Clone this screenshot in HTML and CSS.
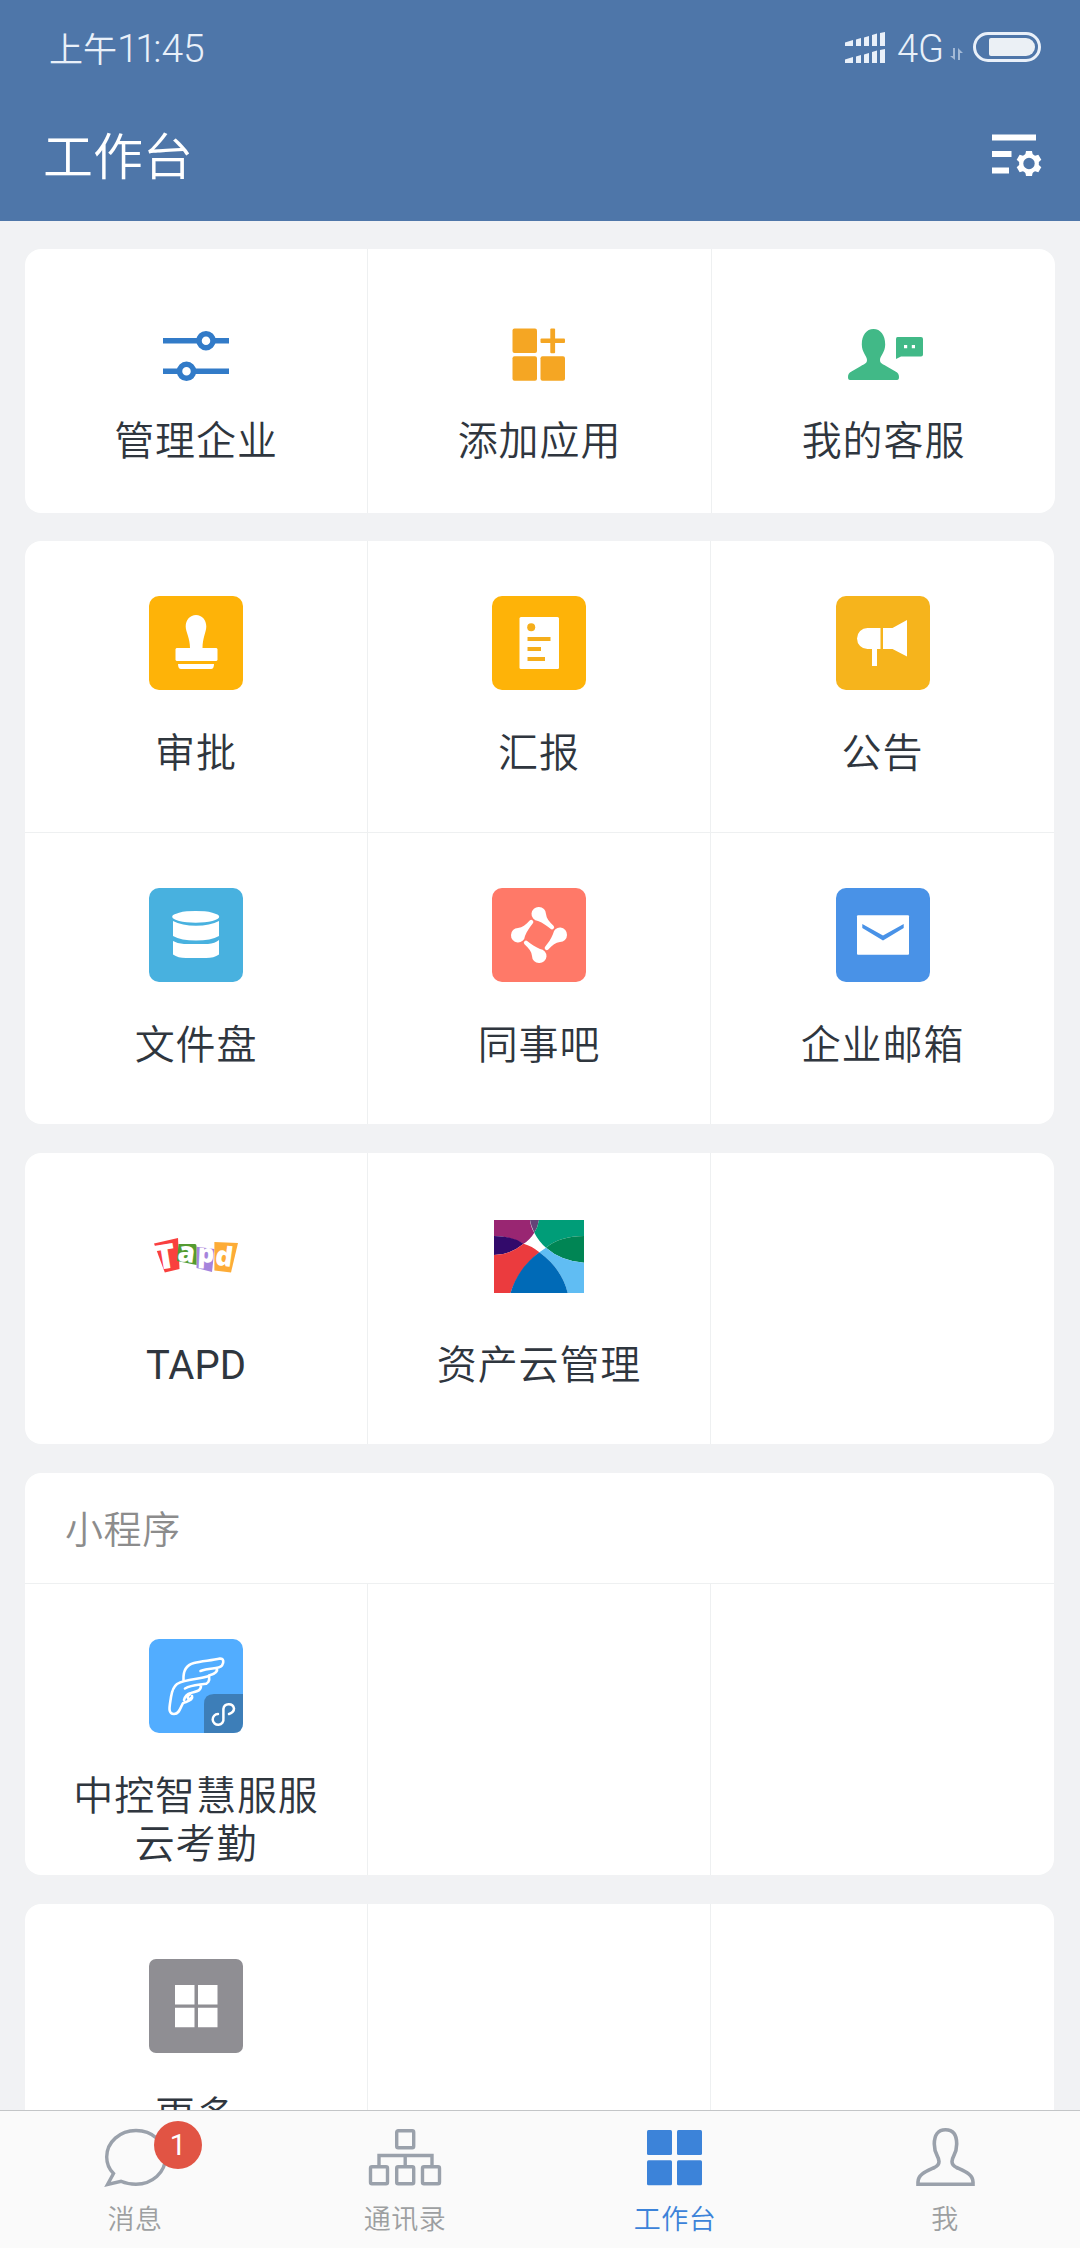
FILE: index.html
```html
<!DOCTYPE html>
<html lang="zh-CN">
<head>
<meta charset="utf-8">
<title>工作台</title>
<link rel="stylesheet" href="styles.css">
</head>
<body>
<div class="app">
  <header class="header">
    <div class="status">
      <div class="clock">上午<span class="digits"><span class="ones">11</span>:45</span></div>
      <div class="indicators">
        <svg class="signal" width="40" height="31" viewBox="0 0 40 31" fill="#e9f0f9">
          <path d="M0 10.500L8 8v6H0zM11 7.500l5-1.500v8h-5zM19 5.500l5-1.500v10h-5zM27 3l5-1.500V14h-5zM35 1l5-1v14h-5z"/>
          <path d="M0 27.500L8 25v6H0zM11 24.500l5-1.500v8h-5zM19 22.500l5-1.500v10h-5zM27 20l5-1.500V31h-5zM35 18l5-1v14h-5z"/>
        </svg>
        <span class="network">4G</span>
        <svg class="arrows" width="13" height="13" viewBox="0 0 13 13" fill="#a3b9d6"><path d="M3 0h2v12L0 8h3zM8 12V0l5 5h-3v7z"/></svg>
        <svg class="battery" width="68" height="30" viewBox="0 0 68 30"><rect x="1.500" y="1.500" width="65" height="27" rx="13.500" fill="none" stroke="#e9f0f9" stroke-width="3"/><path d="M18 6h35a9 9 0 0 1 0 18H18q-2 0-2-2V8q0-2 2-2z" fill="#ebf0f5"/></svg>
      </div>
    </div>
    <div class="titlebar">
      <h1 class="title">工作台</h1>
      <svg width="50" height="44" viewBox="0 0 50 44">
        <path d="M0 3.500h44M0 20h19.500M0 36.500h17" stroke="#fff" stroke-width="6"/>
        <circle cx="37" cy="29.500" r="7.800" fill="none" stroke="#fff" stroke-width="4.200"/>
        <g fill="#fff"><path id="tooth" d="M34 17h6l1 5h-8z"/><use href="#tooth" transform="rotate(60 37 29.500)"/><use href="#tooth" transform="rotate(120 37 29.500)"/><use href="#tooth" transform="rotate(180 37 29.500)"/><use href="#tooth" transform="rotate(240 37 29.500)"/><use href="#tooth" transform="rotate(300 37 29.500)"/></g>
      </svg>
    </div>
  </header>

  <main class="content">
    <section class="card quick">
      <div class="cell">
        <svg class="icon" viewBox="0 0 94 94"><g stroke="#327bc8" fill="none" stroke-width="5.500" stroke-linecap="butt"><path d="M14 32.700h66M14 63.300h66"/><circle cx="57" cy="32.700" r="7" fill="#fff"/><circle cx="37.500" cy="63.300" r="7" fill="#fff"/></g></svg>
        <span class="label">管理企业</span>
      </div>
      <div class="cell">
        <svg class="icon" viewBox="0 0 94 94" fill="#f5a623"><rect x="19.500" y="20.500" width="24.500" height="24.500" rx="2"/><rect x="19.500" y="48.200" width="24.500" height="24.500" rx="2"/><rect x="47.500" y="48.200" width="24.500" height="24.500" rx="2"/><rect x="57.300" y="20.500" width="4.800" height="24.800" rx="1"/><rect x="47.500" y="30.500" width="24.500" height="4.600" rx="1"/></svg>
        <span class="label">添加应用</span>
      </div>
      <div class="cell">
        <svg class="icon" viewBox="0 0 94 94" fill="#41b987"><path d="M36.500 21c7 0 11.700 6 11.700 15.500 0 8-5.200 11.500-5.200 15.500 0 3.500 3 4 6 6l9.500 5.500c2.500 1 3.500 3 3.500 5.500 0 2-.5 3-2 3H13c-1.500 0-2-1-2-3 0-2.500 1-4.500 3.500-5.500L24 58c3-2 6-2.500 6-6 0-4-5.200-7.500-5.200-15.500C24.800 27 29.500 21 36.500 21z"/><path d="M60.500 29H84q2 0 2 2v15.500q0 2-2 2H64L59 51V31q0-2 1.500-2z"/><path d="M67 37h3.200v3.200H67zM74.800 37H78v3.200h-3.200z" fill="#fff"/></svg>
        <span class="label">我的客服</span>
      </div>
    </section>

    <section class="card">
      <div class="cell">
        <svg class="icon" viewBox="0 0 94 94"><rect width="94" height="94" rx="10" fill="#feb308"/><g fill="#fff"><path d="M47 19c6 0 10.300 5 10.300 11.500 0 5-3.800 12-3.800 21.500H67.500l1 1v11l-1 1h-40l-1-1V53l1-1H41c0-9.500-4.300-16.500-4.300-21.500C36.700 24 41 19 47 19z"/><path d="M29 68h36c0 3-1 5-3 5H32c-2 0-3-2-3-5z"/></g></svg>
        <span class="label">审批</span>
      </div>
      <div class="cell">
        <svg class="icon" viewBox="0 0 94 94"><rect width="94" height="94" rx="10" fill="#feb308"/><rect x="27.500" y="21" width="39.500" height="52" rx="1.500" fill="#fff"/><circle cx="39.200" cy="31.200" r="4" fill="#f5ae1b"/><path d="M35.500 43h23M35.500 53H49M35.500 63H53" stroke="#f5ae1b" stroke-width="4"/></svg>
        <span class="label">汇报</span>
      </div>
      <div class="cell">
        <svg class="icon" viewBox="0 0 94 94"><rect width="94" height="94" rx="10" fill="#f6b41c"/><path d="M44.500 32v21H41v17h-5V53h-4.500a10.500 10.500 0 0 1 0-21zM47 32h9.500L71 24v36.500L56.500 53H47z" fill="#fff"/></svg>
        <span class="label">公告</span>
      </div>
      <div class="cell">
        <svg class="icon" viewBox="0 0 94 94"><rect width="94" height="94" rx="10" fill="#48b1df"/><g fill="#fff"><ellipse cx="46.700" cy="28.800" rx="23.500" ry="5.900"/><path d="M24 33q9 4.800 23 4.800T70 33v15q-8 4.600-23 4.600T24 48z"/><path d="M24 53q5 3 11 3h24q7-.5 11-4v14.500q-5 3.500-13 3.500H37q-8 0-13-3.500z"/></g></svg>
        <span class="label">文件盘</span>
      </div>
      <div class="cell">
        <svg class="icon" viewBox="0 0 94 94"><rect width="94" height="94" rx="10" fill="#ff7968"/><g fill="#fff"><path id="drop" d="M47 19a7 7 0 0 1 7 7c.5 4.500 3 7.500 7.500 11.700a2.100 2.100 0 0 1-3 3C54.500 37.500 51 35 46 33a7 7 0 0 1 1-14z"/><use href="#drop" transform="rotate(90 47 47)"/><use href="#drop" transform="rotate(180 47 47)"/><use href="#drop" transform="rotate(270 47 47)"/></g></svg>
        <span class="label">同事吧</span>
      </div>
      <div class="cell">
        <svg class="icon" viewBox="0 0 94 94"><rect width="94" height="94" rx="10" fill="#4992e7"/><rect x="21" y="27.300" width="52" height="39.500" rx="1" fill="#fff"/><path d="M26.300 36L47 47.500 67.700 36v4L47 52.500 26.300 40z" fill="#4992e7"/></svg>
        <span class="label">企业邮箱</span>
      </div>
    </section>

    <section class="card">
      <div class="cell">
        <svg class="icon logo" viewBox="0 0 94 94">
          <path d="M5 35.500L29 30l1.500 31-14.700 3.500z" fill="#f9403e"/><path d="M47.500 38.700L65.500 41 63 64l-15.500-4z" fill="#a584dc"/><path d="M65.400 34L89 35l-7 29.500-16.600-2z" fill="#fdac37"/><path d="M29.500 36H46q1.500 0 1.500 2v19L28 53z" fill="#549b31"/>
          <text x="6.500" y="60.500" font-size="34" transform="rotate(-9 17 50)">T</text><text x="28.500" y="54" font-size="28" transform="rotate(7 38 47)">a</text><text x="48.500" y="54.500" font-size="26" transform="rotate(3 57 50)">p</text><text x="66.500" y="58" font-size="27" transform="rotate(8 76 48)">d</text>
        </svg>
        <span class="label latin">TAPD</span>
      </div>
      <div class="cell">
        <svg class="icon" viewBox="0 0 94 94">
          <path d="M2 12h36q1 8 4.300 12.700-4.300 7-10.700 11Q17 28 2 28z" fill="#992672"/><path d="M38 12h9q-1 7-4.700 12.700Q39 18 38 12z" fill="#644478"/><path d="M47 12h45v16q-24 0-38 11.700-7-6-11.700-15Q46 19 47 12z" fill="#009d78"/><path d="M54 39.700Q68 28 92 28v26.700Q69 53 54 39.700z" fill="#008554"/><path d="M2 28q18 0 29.600 7.700Q18 47 2 47z" fill="#320a6b"/><path d="M2 47q16 0 29.600-11.300Q40 38 47.400 44.300 26 62 18.500 85H2z" fill="#eb3b3e"/><path d="M54 39.700Q69 53 92 54.700V85H75.700Q70 61 47.400 44.300z" fill="#60bdf3"/><path d="M47.400 44.300Q70 61 75.700 85H18.500Q26 60 47.400 44.300z" fill="#006ab7"/>
        </svg>
        <span class="label">资产云管理</span>
      </div>
      <div class="cell"></div>
    </section>

    <section class="card">
      <h2 class="card-title">小程序</h2>
      <div class="cell">
        <svg class="icon" viewBox="0 0 94 94"><rect width="94" height="94" rx="10" fill="#52adff"/><path d="M55 94V65q0-10 10-10h29v29q0 10-10 10z" fill="#3d7eb8"/>
          <g fill="none" stroke="#fff" stroke-width="2.600" stroke-linecap="round" stroke-linejoin="round"><path d="M34.500 41C34 32 37 26 45 24c8-2 18-2.500 26-4.500 4 0 4 4 2 7-3 4-12 2-21.500 5.500M68 29c1 4-2 6-8 7.500"/><path d="M60 37c-11 4-22 2-32 8-4 3-5 7-6 13-1 8-4 17 3 17 5 0 6-5 8-9 1-3 2-2 4-3 5-2 7-3 6-6M60 37c1 5-1 8-5 8-7 1-13 1-19 4.500M52 46.500c0 6-5 6-10 7.500-4 1-6 3-7 7M41 55c-4 2-2 8 1 4"/><path d="M80 75c3-1 5-3 5-5.500a5.400 5.400 0 0 0-10.600.5v9.500A5.400 5.400 0 1 1 69 75" stroke-width="2.500"/></g></svg>
        <span class="label">中控智慧服服云考勤</span>
      </div>
      <div class="cell"></div>
      <div class="cell"></div>
    </section>

    <section class="card">
      <div class="cell">
        <svg class="icon" viewBox="0 0 94 94"><rect width="94" height="94" rx="7" fill="#8f8e93"/><path d="M26 26h19.500v19.500H26zM49 26h19.500v19.500H49zM26 48.700h19.500v19.500H26zM49 48.700h19.500v19.500H49z" fill="#fff"/></svg>
        <span class="label">更多</span>
      </div>
      <div class="cell"></div>
      <div class="cell"></div>
    </section>
  </main>

  <nav class="tabs">
    <a class="tab">
      <span class="tab-icon">
        <svg width="84" height="60" viewBox="0 0 84 60"><path d="M20.500 46.500C16 42 13.700 36 13.700 30 13.700 15 27 3.500 43 3.500S72.500 15 72.500 30.300 59 57.300 43 57.300c-5.500 0-10.500-1-15-3L14.500 57.500z" fill="none" stroke="#9aa1ab" stroke-width="3.400"/></svg>
        <b class="badge">1</b>
      </span>
      <span class="tab-label">消息</span>
    </a>
    <a class="tab">
      <svg width="84" height="60" viewBox="0 0 84 60" fill="none" stroke="#9aa1ab" stroke-width="3.400"><rect x="33.700" y="3.700" width="17" height="17" rx="1.500"/><rect x="7.500" y="39.700" width="17" height="17" rx="1.500"/><rect x="33.700" y="39.700" width="17" height="17" rx="1.500"/><rect x="59.500" y="39.700" width="17" height="17" rx="1.500"/><path d="M16 40V28.500h53V40M42.200 28.500V40"/></svg>
      <span class="tab-label">通讯录</span>
    </a>
    <a class="tab active">
      <svg width="84" height="60" viewBox="0 0 84 60" fill="#3c83d9"><rect x="14" y="3" width="25" height="25" rx="1.500"/><rect x="44" y="3" width="25" height="25" rx="1.500"/><rect x="14" y="33.300" width="25" height="25" rx="1.500"/><rect x="44" y="33.300" width="25" height="25" rx="1.500"/></svg>
      <span class="tab-label">工作台</span>
    </a>
    <a class="tab">
      <svg width="84" height="60" viewBox="0 0 84 60" fill="none" stroke="#9aa1ab" stroke-width="3.600"><path d="M42.500 2.800C50 2.800 53.700 8 53.700 17 53.700 28 49 29 49 34.500c0 3 1.500 4.500 4.500 6C61 44 70 47 70 55v2.200H15V55c0-8 9-11 16.500-14.500 3-1.500 4.500-3 4.500-6C36 29 31.300 28 31.300 17c0-9 3.700-14.200 11.200-14.200z"/></svg>
      <span class="tab-label">我</span>
    </a>
  </nav>
</div>
</body>
</html>
```
FILE: styles.css
```css
* { box-sizing: border-box; }
body {
  margin: 0;
  background: #f1f2f4;
  color: #2f363e;
  font-family: Roboto, "Noto Sans CJK SC", sans-serif;
  font-weight: 350;
}
svg { display: block; flex: none; }
.app { display: flex; flex-direction: column; height: 2248px; overflow: hidden; }

.header { height: 221px; flex: none; background: #4e76a9; color: #fff; }
.status { display: flex; justify-content: space-between; height: 96px; padding: 0 39px 0 49px; color: #e9f0f9; }
.clock { display: flex; align-items: baseline; padding-top: 23px; font-size: 34px; line-height: 52px; }
.digits { font-size: 39px; }
.ones { letter-spacing: -3.500px; }
.indicators { display: flex; }
.signal { margin-top: 32px; }
.network { margin: 23px 0 0 12px; width: 53px; font-size: 38px; line-height: 53px; }
.arrows { margin-top: 48px; }
.battery { margin: 32px 0 0 10px; }
.titlebar { display: flex; justify-content: space-between; align-items: flex-start; padding: 0 38px 0 43px; }
.title { margin: 24px 0 0; font-size: 50px; line-height: 76px; font-weight: 350; }
.titlebar svg { margin-top: 38px; }

.content { flex: 1; min-height: 0; overflow: hidden; padding: 28px 26px 0 25px; }
.card {
  display: grid;
  grid-template-columns: 342px 342px 1fr;
  gap: 1px;
  margin-bottom: 29px;
  border-radius: 16px;
  background: #eef0f1;
  overflow: hidden;
}
.cell { display: flex; flex-direction: column; align-items: center; height: 291px; padding-top: 55px; background: #fff; }
.icon { width: 94px; height: 94px; }
.logo text { font-family: "Open Sans", sans-serif; font-weight: 800; fill: #fff; }
.label { width: 252px; margin-top: 40px; text-align: center; font-size: 40px; line-height: 48px; letter-spacing: .9px; }
.latin { font-weight: 400; letter-spacing: 0; }
.quick { grid-template-columns: 342px 343px 1fr; margin-right: -1px; margin-bottom: 28px; }
.quick .cell { height: 264px; padding-top: 59px; }
.quick .label { margin-top: 16px; }
.card-title { grid-column: 1 / -1; height: 110px; margin: 0; padding: 2px 40px 0; background: #fff; color: #8c8c8c; font-size: 38px; line-height: 110px; font-weight: 350; letter-spacing: .6px; }

.tabs { display: flex; flex: none; height: 138px; border-top: 1px solid #c3c5c7; background: #fafafa; }
.tab { display: flex; flex: 1; flex-direction: column; align-items: center; padding-top: 16px; color: #9d9fa1; }
.tab-icon { position: relative; }
.tab-label { margin-top: 15px; font-size: 27px; line-height: 36px; letter-spacing: .5px; }
.active { color: #3c83d9; }
.badge { position: absolute; left: 61px; top: -6px; width: 48px; height: 48px; border-radius: 50%; background: #e15444; color: #fff; font-size: 29px; line-height: 49px; font-weight: 400; text-align: center; }
```
